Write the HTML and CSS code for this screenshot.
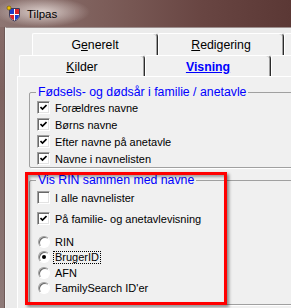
FILE: index.html
```html
<!DOCTYPE html>
<html lang="da">
<head>
    <meta charset="UTF-8">
    <title>Tilpas</title>
    <link rel="stylesheet" href="styles.css">
</head>
<body>
    <div class="window">
        <div class="titlebar">
            <svg class="app-icon" viewBox="0 0 16 17" width="16" height="17">
                <path d="M3.5 3.5h10v6.5c0 3-2.2 4.8-5 6-2.8-1.2-5-3-5-6z" fill="#fff" stroke="#3a3a5a"/>
                <path d="M4 4h4v5H4z" fill="#1c3fc8"/>
                <path d="M9 4h4v5H9z" fill="#d8232a"/>
                <path d="M4 10h4v5.2C5.5 14.2 4 12.5 4 10z" fill="#d8232a"/>
                <path d="M9 10h4c0 2.5-1.5 4.2-4 5.2z" fill="#1c3fc8"/>
                <circle cx="3" cy="3" r="2" fill="#f2c200" stroke="#6b5200" stroke-width="0.6"/>
            </svg>
            <span class="title">Tilpas</span>
        </div>

        <div class="client">
            <!-- two rows of tabs -->
            <div class="tab-row row-back">
                <div class="tab">G<u>e</u>nerelt</div>
                <div class="tab"><u>R</u>edigering</div>
                <div class="tab"></div>
            </div>
            <div class="tab-row row-front">
                <div class="tab"><u>K</u>ilder</div>
                <div class="tab active">Visning</div>
                <div class="tab"></div>
            </div>

            <div class="panel">
                <fieldset class="group">
                    <legend>Fødsels- og dødsår i familie / anetavle</legend>
                    <div class="opt"><span class="check"><svg viewBox="0 0 7 7" width="7" height="7"><path d="M0.5 3 L2.5 5 L6.5 1" fill="none" stroke="#000" stroke-width="1.6"/></svg></span>Forældres navne</div>
                    <div class="opt"><span class="check"><svg viewBox="0 0 7 7" width="7" height="7"><path d="M0.5 3 L2.5 5 L6.5 1" fill="none" stroke="#000" stroke-width="1.6"/></svg></span>Børns navne</div>
                    <div class="opt"><span class="check"><svg viewBox="0 0 7 7" width="7" height="7"><path d="M0.5 3 L2.5 5 L6.5 1" fill="none" stroke="#000" stroke-width="1.6"/></svg></span>Efter navne på anetavle</div>
                    <div class="opt"><span class="check"><svg viewBox="0 0 7 7" width="7" height="7"><path d="M0.5 3 L2.5 5 L6.5 1" fill="none" stroke="#000" stroke-width="1.6"/></svg></span>Navne i navnelisten</div>
                </fieldset>

                <fieldset class="group group-rin">
                    <legend>Vis RIN sammen med navne</legend>
                    <div class="opt"><span class="check"></span>I alle navnelister</div>
                    <div class="opt"><span class="check"><svg viewBox="0 0 7 7" width="7" height="7"><path d="M0.5 3 L2.5 5 L6.5 1" fill="none" stroke="#000" stroke-width="1.6"/></svg></span>På familie- og anetavlevisning</div>
                    <div class="radios">
                        <div class="opt"><span class="radio"></span>RIN</div>
                        <div class="opt"><span class="radio on"></span><span class="focus">BrugerID</span></div>
                        <div class="opt"><span class="radio"></span>AFN</div>
                        <div class="opt"><span class="radio"></span>FamilySearch ID'er</div>
                    </div>
                </fieldset>

                <!-- red annotation box -->
                <div class="highlight"></div>
            </div>
        </div>
    </div>
</body>
</html>
```

FILE: styles.css
```css
/* General Styles */
* {
    margin: 0;
    padding: 0;
    box-sizing: border-box;
}

body {
    width: 291px;
    height: 308px;
    overflow: hidden;
    font-family: "Liberation Sans", Arial, sans-serif;
    background-color: #8f7a78;
}

.window {
    width: 291px;
    height: 308px;
    overflow: hidden;
    display: flex;
    flex-direction: column;
    background: linear-gradient(180deg, #8a6f6c, #7d625f 30%, #8e7a78);
}

/* Title bar */
.titlebar {
    height: 27px;
    flex: none;
    display: flex;
    align-items: center;
    padding-left: 6px;
    background:
        radial-gradient(ellipse 48px 15px at 42px 12px, rgba(236, 226, 223, 0.85), rgba(236, 226, 223, 0)),
        linear-gradient(90deg, #8d7572 0%, #7d5e5a 35%, #684542 70%, #5b3835 100%);
}

.app-icon {
    flex: none;
    margin-right: 5px;
}

.title {
    font-size: 11.5px;
    color: #000;
}

/* Dialog client area */
.client {
    flex: 1;
    margin-left: 5px;
    padding-top: 5px;
    background-color: #ebebeb;
    border-top: 1px solid #9d8f8e;
    border-left: 1px solid #f4f4f4;
    box-shadow: -1px 0 #6e5957;
}

/* Tabs */
.tab-row {
    display: flex;
    height: 22px;
}

.row-back {
    padding-left: 26px;
}

.row-front {
    padding-left: 13px;
    height: 21px;
}

.tab {
    flex: none;
    width: 126px;
    padding-top: 4px;
    background-color: #f0f0f0;
    border-top: 1px solid #fff;
    border-left: 1px solid #fff;
    border-right: 1px solid #2b2b2b;
    border-radius: 2px 4px 0 0;
    box-shadow: inset -1px 0 #a0a0a0;
    font-size: 12.3px;
    line-height: 15px;
    text-align: center;
    color: #000;
}

.tab.active {
    color: #0000ff;
    font-weight: bold;
    text-decoration: underline;
}

/* Tab page */
.panel {
    position: relative;
    height: 100%;
    margin-left: 11px;
    margin-right: -60px;
    padding: 8px 0 0 11px;
    background-color: #f0f0f0;
    border-top: 1px solid #fff;
    border-left: 1px solid #fff;
}

.group {
    border: 1px solid #a0a0a0;
    border-radius: 2px;
    padding: 0 0 0 7px;
    box-shadow: 1px 1px #fff;
}

.group legend {
    margin-left: -1px;
    padding: 0 2px;
    font-size: 12.3px;
    line-height: 14px;
    color: #0000ff;
}

.group-rin {
    margin-top: 5px;
}

.opt {
    display: flex;
    align-items: center;
    height: 17px;
    font-size: 11px;
    color: #000;
}

.group-rin .opt {
    height: 21px;
}

.radios {
    margin-top: 5px;
    padding-bottom: 8px;
}

.group-rin .radios .opt {
    height: 15.5px;
}

/* Check boxes and radio buttons */
.check {
    flex: none;
    width: 13px;
    height: 13px;
    margin-right: 5px;
    display: flex;
    align-items: center;
    justify-content: center;
    background-color: #fff;
    border: 1px solid;
    border-color: #a0a0a0 #fff #fff #a0a0a0;
    box-shadow: inset 1px 1px #696969, inset -1px -1px #e3e3e3;
}

.radio {
    flex: none;
    width: 12px;
    height: 12px;
    margin: 0 5px 0 1px;
    display: flex;
    align-items: center;
    justify-content: center;
    border-radius: 50%;
    background-color: #fff;
    border: 1px solid;
    border-color: #a0a0a0 #fff #fff #a0a0a0;
    box-shadow: inset 1px 1px #696969;
}

.radio.on::after {
    content: "";
    width: 4px;
    height: 4px;
    border-radius: 50%;
    background-color: #000;
}

.focus {
    margin-left: -2px;
    padding: 0 1px;
    line-height: 11px;
    border: 1px dotted #000;
}

/* Red annotation */
.highlight {
    position: absolute;
    left: 7px;
    top: 95px;
    width: 202px;
    height: 133px;
    border: 3px solid #ff0000;
    box-shadow: 2px 2px 3px rgba(0, 0, 0, 0.45), inset 2px 2px 3px rgba(0, 0, 0, 0.35);
}
```
